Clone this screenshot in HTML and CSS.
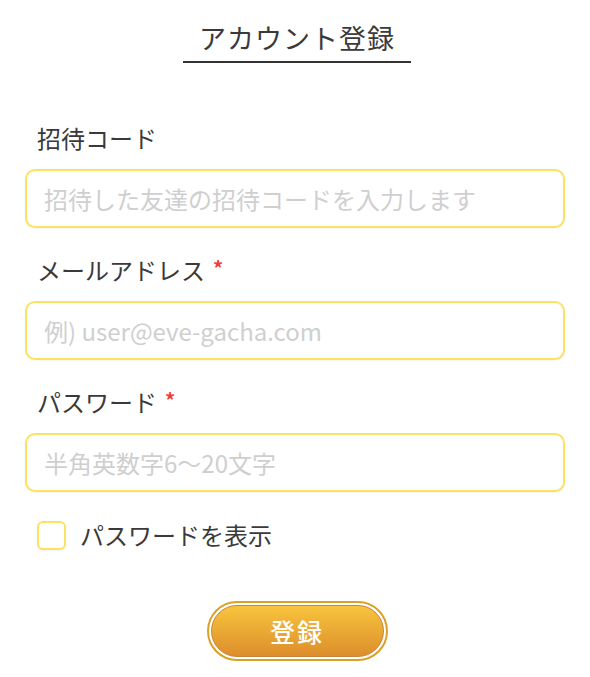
FILE: index.html
```html
<!DOCTYPE html>
<html lang="ja">
<head>
<meta charset="utf-8">
<link rel="stylesheet" href="styles.css">
</head>
<body>
<div class="page">
  <header class="header">
    <h1 class="title">アカウント登録</h1>
  </header>
  <form class="form">
    <div class="field">
      <label class="label">招待コード</label>
      <input class="input" type="text" placeholder="招待した友達の招待コードを入力します">
    </div>
    <div class="field">
      <label class="label">メールアドレス<span class="req">*</span></label>
      <input class="input" type="text" placeholder="例) user@eve-gacha.com">
    </div>
    <div class="field">
      <label class="label">パスワード<span class="req">*</span></label>
      <input class="input" type="password" placeholder="半角英数字6〜20文字">
    </div>
    <label class="check">
      <span class="box"></span>
      <span class="check-text">パスワードを表示</span>
    </label>
    <div class="actions">
      <button type="button" class="btn"><span class="btn-inner">登録</span></button>
    </div>
  </form>
</div>
</body>
</html>
```
FILE: styles.css
```css
* { box-sizing: border-box; }
html, body { margin: 0; padding: 0; background: #fff; }
body {
  font-family: "Noto Sans CJK JP", "Noto Sans", sans-serif;
  color: #3a3a3a;
}
.page { width: 590px; }
.header {
  display: flex;
  justify-content: center;
  padding-top: 19px;
  padding-left: 4px;
}
.title {
  margin: 0;
  width: 228px;
  font-size: 27px;
  font-weight: 400;
  line-height: 38px;
  letter-spacing: 1px;
  text-align: center;
  padding-bottom: 4px;
  border-bottom: 2px solid #333;
  color: #3a3a3a;
}
.form {
  padding: 59px 25px 0 25px;
  display: flex;
  flex-direction: column;
}
.field {
  display: flex;
  flex-direction: column;
  margin-bottom: 26px;
}
.label {
  display: block;
  height: 32px;
  padding-left: 12px;
  font-size: 24px;
  line-height: 32px;
  margin-bottom: 15px;
  color: #3a3a3a;
}
.req {
  color: #f03c3c;
  margin-left: 8px;
  font-size: 20px;
  line-height: 1;
  font-weight: 700;
  vertical-align: top;
  position: relative;
  top: 4px;
}
.input {
  height: 59px;
  width: 100%;
  border: 2px solid #fde162;
  border-radius: 10px;
  padding: 0 17px;
  font-family: "Noto Sans CJK JP", "Noto Sans", sans-serif;
  font-size: 24px;
  color: #3a3a3a;
  background: #fff;
  outline: none;
  box-shadow: 0 1px 2px rgba(0, 0, 0, 0.05);
}
.input::placeholder { color: #cfcfcf; }
.check {
  display: flex;
  align-items: center;
  padding-left: 12px;
  margin-top: 1px;
  gap: 14px;
}
.box {
  width: 29px;
  height: 29px;
  border: 2px solid #fde162;
  border-radius: 6px;
  background: #fff;
  box-shadow: 0 1px 2px rgba(0, 0, 0, 0.05);
}
.check-text {
  font-size: 24px;
  line-height: 32px;
}
.actions {
  display: flex;
  justify-content: center;
  padding-top: 50px;
  padding-left: 4px;
}
.btn {
  width: 181px;
  height: 60px;
  border: 2px solid #dba125;
  border-radius: 30px;
  padding: 2px;
  background: #fff;
  cursor: pointer;
}
.btn-inner {
  display: flex;
  align-items: center;
  justify-content: center;
  width: 100%;
  height: 100%;
  border-radius: 26px;
  border: 1.5px solid #c9853b;
  background: linear-gradient(#f8c43d, #dc8e2b);
  color: #fff;
  font-family: "Noto Sans CJK JP", "Noto Sans", sans-serif;
  font-size: 25px;
  letter-spacing: 2px;
  font-weight: 500;
}
```
